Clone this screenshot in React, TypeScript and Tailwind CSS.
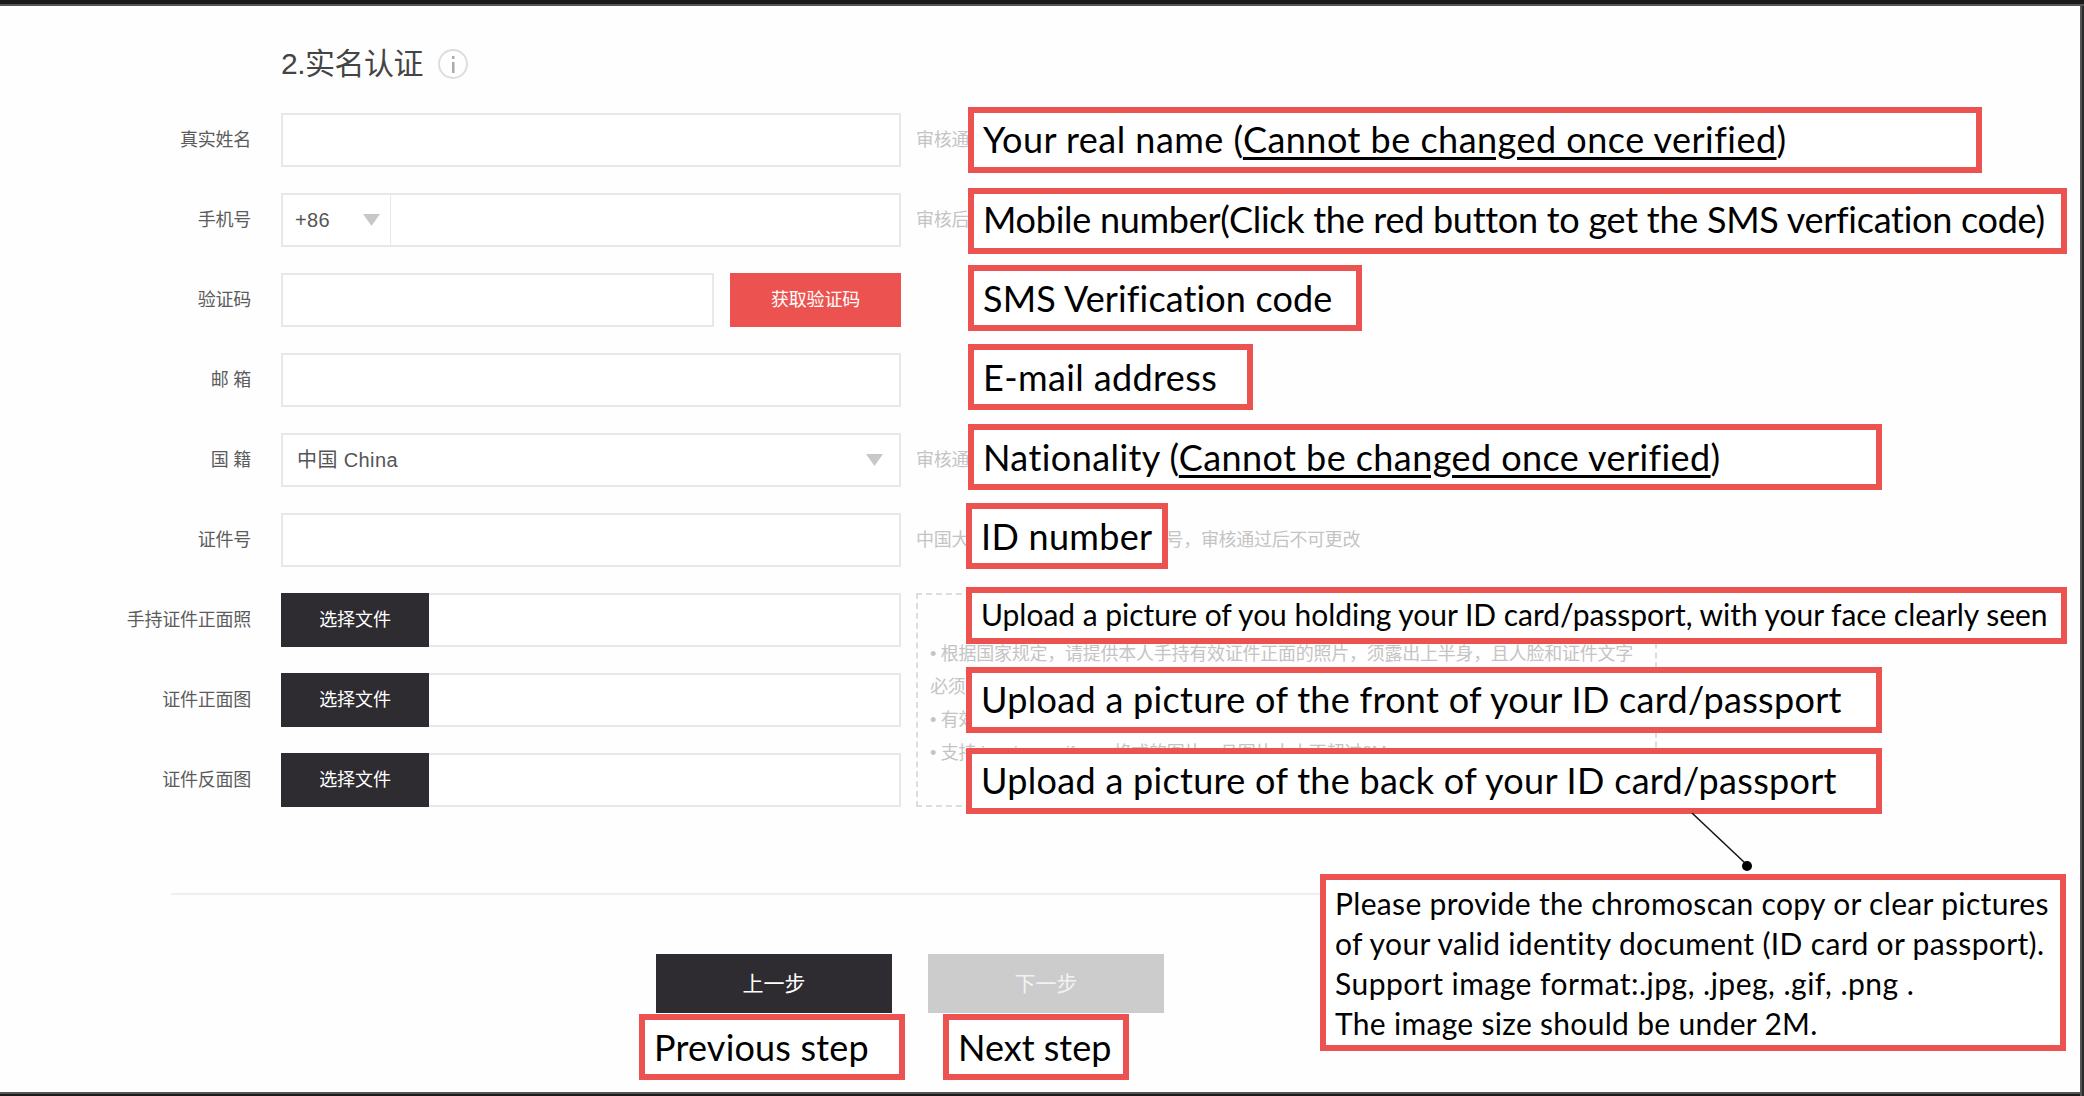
import React from "react";

const Label = ({ children }: { children: React.ReactNode }) => (
  <div className="flex items-center justify-end pr-[30px] text-[18px] tracking-[-0.25px] text-[#5c5c5c]">{children}</div>
);

const Hint = ({ children }: { children: React.ReactNode }) => (
  <div className="flex items-center whitespace-nowrap pl-[15px] text-[18px] tracking-[-0.3px] text-[#c4c4c4]">{children}</div>
);

const Arrow = () => (
  <svg width="17" height="12" viewBox="0 0 17 12" className="shrink-0">
    <path d="M0 0H17L8.5 12Z" fill="#c8c8c8" />
  </svg>
);

const FileInput = () => (
  <div className="flex h-[54px] border-2 border-[#e8e8e8] border-l-0 bg-white">
    <div className="-my-[2px] flex h-[54px] w-[148px] items-center justify-center bg-[#2e2c30] text-[18px] tracking-[-0.1px] text-white">选择文件</div>
  </div>
);

const Input = () => <div className="h-[54px] border-2 border-[#e8e8e8] bg-white" />;

const box = "absolute flex items-center whitespace-nowrap border-[6px] border-[#ec5350] bg-white font-['Lato','Noto_Sans',sans-serif] font-normal text-black";

export default function App() {
  return (
    <div className="relative flex h-[1096px] w-[2084px] flex-col overflow-hidden bg-[#fefefe] font-['Liberation_Sans','Noto_Sans_CJK_SC',sans-serif]">
      <div className="h-1 shrink-0 bg-[#1a1a1a]" />
      <div className="h-[2px] shrink-0 bg-[#555555]" />

      <main className="flex min-h-0 flex-1 flex-col pt-[43px]">
        <div className="flex h-[30px] items-center gap-[15px] pl-[281px]">
          <h1 className="text-[30px] leading-[30px] font-normal tracking-[-0.5px] text-[#444444]">2.实名认证</h1>
          <span className="flex h-[30px] w-[30px] items-center justify-center rounded-full border-2 border-[#dddddd]">
            <svg width="4" height="17" viewBox="0 0 4 17"><rect x="1" y="0" width="2.5" height="3" fill="#aaaaaa" /><rect x="1" y="6" width="2.5" height="11" fill="#aaaaaa" /></svg>
          </span>
        </div>

        <form className="mt-[34px] grid grid-cols-[281px_620px_1fr] gap-y-[26px]">
          <Label>真实姓名</Label>
          <Input />
          <Hint>审核通过后不可更改</Hint>

          <Label>手机号</Label>
          <div className="flex h-[54px] border-2 border-[#e8e8e8] bg-white">
            <div className="flex w-[108px] items-center justify-between border-r border-[#e8e8e8] pr-[10px] pl-[12px] text-[20px] tracking-[0.3px] text-[#555555]">
              <span>+86</span>
              <Arrow />
            </div>
          </div>
          <Hint>审核后不可更改</Hint>

          <Label>验证码</Label>
          <div className="flex gap-[16px]">
            <div className="h-[54px] flex-1 border-2 border-[#e8e8e8] bg-white" />
            <button type="button" className="h-[54px] w-[171px] bg-[#ec5350] text-[18px] tracking-[-0.2px] text-white">获取验证码</button>
          </div>
          <div />

          <Label>邮&nbsp;箱</Label>
          <Input />
          <div />

          <Label>国&nbsp;籍</Label>
          <div className="flex h-[54px] items-center justify-between border-2 border-[#e8e8e8] bg-white pr-[16px] pl-[14px] text-[20px] tracking-[0.4px] text-[#555555]">
            <span>中国 China</span>
            <Arrow />
          </div>
          <Hint>审核通过后不可更改</Hint>

          <Label>证件号</Label>
          <Input />
          <Hint>中国大陆用户请填写18位身份证号，审核通过后不可更改</Hint>

          <Label>手持证件正面照</Label>
          <FileInput />
          <div className="row-span-3 ml-[15px] h-[214px] w-[741px] border-2 border-dashed border-[#dddddd] pt-[43px] pl-[12px] text-[18px] leading-[33px] tracking-[-0.25px] whitespace-nowrap text-[#c4c4c4]">
            <p>• 根据国家规定，请提供本人手持有效证件正面的照片，须露出上半身，且人脸和证件文字</p>
            <p>必须清晰可见</p>
            <p>• 有效证件包括身份证或护照</p>
            <p>• 支持.jpg .jpeg .gif .png格式的图片，且图片大小不超过2M</p>
          </div>

          <Label>证件正面图</Label>
          <FileInput />

          <Label>证件反面图</Label>
          <FileInput />
        </form>

        <hr className="mt-[86px] ml-[171px] w-[1300px] border-0 border-t-2 border-[#efefef]" />

        <div className="mt-[59px] ml-[656px] flex gap-[36px]">
          <button type="button" className="h-[59px] w-[236px] bg-[#2e2c30] text-[21px] text-white">上一步</button>
          <button type="button" className="h-[59px] w-[236px] bg-[#cccccc] text-[21px] text-[#f2f2f2]">下一步</button>
        </div>
      </main>

      <div className="h-[2px] shrink-0 bg-[#555555]" />
      <div className="h-[2px] shrink-0 bg-[#1a1a1a]" />

      <div className="absolute top-[6px] right-0 bottom-0 w-[4px] border-l-2 border-[#555555] bg-[#2a2a2a]" />

      <div className={`${box} top-[107px] left-[968px] h-[66px] w-[1014px] pl-[9px] text-[36px] tracking-[0.48px]`}>
        <span className="-mt-[3px]">Your real name (<u className="underline-offset-[4px]">Cannot be changed once verified</u>)</span>
      </div>
      <div className={`${box} top-[188px] left-[968px] h-[66px] w-[1099px] pl-[9px] text-[36px] tracking-[-0.27px]`}>
        <span className="-mt-[5px]">Mobile number(Click the red button to get the SMS verfication code)</span>
      </div>
      <div className={`${box} top-[265px] left-[968px] h-[66px] w-[394px] pl-[9px] text-[36px] tracking-[0.13px]`}>
        <span className="-mt-[1px]">SMS Verification code</span>
      </div>
      <div className={`${box} top-[344px] left-[968px] h-[66px] w-[285px] pl-[9px] text-[36px] tracking-[0.38px]`}>
        <span className="-mt-[1px]">E-mail address</span>
      </div>
      <div className={`${box} top-[424px] left-[968px] h-[66px] w-[914px] pl-[9px] text-[36px] tracking-[0.42px]`}>
        <span className="-mt-[1px]">Nationality (<u className="underline-offset-[4px]">Cannot be changed once verified</u>)</span>
      </div>
      <div className={`${box} top-[503px] left-[966px] h-[66px] w-[202px] pl-[9px] text-[36px] tracking-[0.3px]`}>
        <span className="-mt-[1px]">ID number</span>
      </div>
      <div className={`${box} top-[587px] left-[966px] h-[57px] w-[1101px] pl-[9px] text-[30px] tracking-[-0.03px]`}>
        <span className="-mt-[2px]">Upload a picture of you holding your ID card/passport, with your face clearly seen</span>
      </div>
      <div className={`${box} top-[667px] left-[966px] h-[66px] w-[916px] pl-[9px] text-[36px] tracking-[0.3px]`}>
        <span className="-mt-[2px]">Upload a picture of the front of your ID card/passport</span>
      </div>
      <div className={`${box} top-[748px] left-[966px] h-[66px] w-[916px] pl-[9px] text-[36px] tracking-[0.3px]`}>
        <span className="-mt-[2px]">Upload a picture of the back of your ID card/passport</span>
      </div>
      <div className={`${box} top-[1014px] left-[639px] h-[66px] w-[266px] pl-[9px] text-[36px] tracking-[0.2px]`}>
        <span>Previous step</span>
      </div>
      <div className={`${box} top-[1014px] left-[943px] h-[66px] w-[186px] pl-[9px] text-[36px]`}>
        <span>Next step</span>
      </div>
      <div className={`${box} top-[874px] left-[1320px] h-[177px] w-[746px] pl-[9px] text-[30px] leading-[40px]`}>
        <div>
          <p className="tracking-[0.33px]">Please provide the chromoscan copy or clear pictures</p>
          <p className="tracking-[0.35px]">of your valid identity document (ID card or passport).</p>
          <p className="tracking-[0.48px]">Support image format:.jpg, .jpeg, .gif, .png .</p>
          <p className="tracking-[0.31px]">The image size should be under 2M.</p>
        </div>
      </div>

      <svg className="absolute top-[810px] left-[1685px]" width="70" height="64" viewBox="0 0 70 64">
        <path d="M7 3L60 53" stroke="#111111" strokeWidth="1.5" fill="none" />
        <circle cx="62" cy="56" r="5" fill="#000000" />
      </svg>
    </div>
  );
}
